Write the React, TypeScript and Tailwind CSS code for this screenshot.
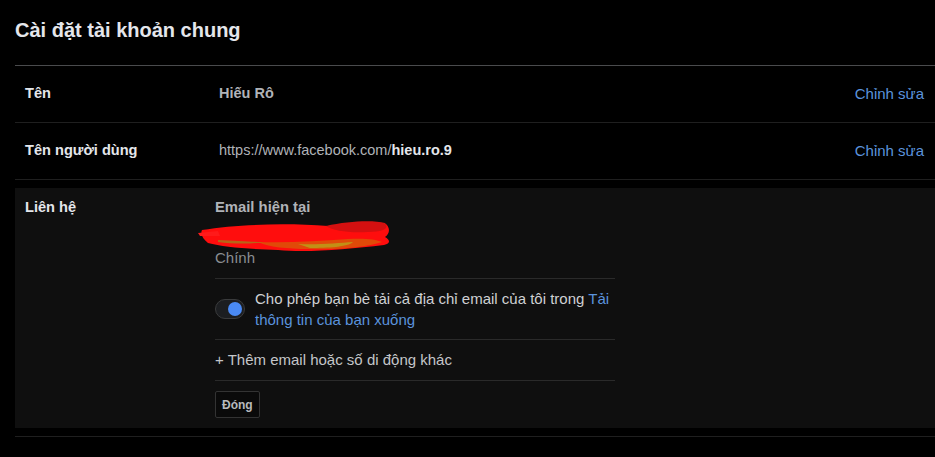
import React from "react";

const font = { fontFamily: '"Liberation Sans", Arial, sans-serif' };

function Scribble() {
  // vệt tô đỏ che email
  return (
    <svg width="196" height="32" viewBox="0 0 196 32" className="absolute left-[-17px] top-[5px]">
      <path d="M4 9 C40 3 90 2 130 5 C160 2 180 0 188 3 C193 8 191 13 187 16 C192 19 193 22 186 24 C150 28 110 32 80 29 C50 28 25 26 10 22 C5 18 2 13 4 9 Z" fill="#ff0d0d" />
      <path d="M0 12 L20 10 L22 15 L2 15 Z" fill="#ff1a1a" />
      <path d="M128 5 C150 0 175 -1 187 2 C191 7 187 11 170 11 C150 12 136 10 128 5 Z" fill="#d41010" />
      <path d="M60 21 C90 22 120 20 150 18 C165 17 178 18 184 21 C170 26 140 29 110 28 C90 28 70 26 60 21 Z" fill="#e04a08" />
      <path d="M100 23 C120 24 140 22 155 21 C150 26 130 27 112 27 Z" fill="#b9a11a" opacity="0.8" />
      <path d="M20 19 C40 20 55 21 66 21 C55 23 35 23 20 21 Z" fill="#9a8a1c" opacity="0.7" />
    </svg>
  );
}

function Row({ label, children }: { label: string; children: React.ReactNode }) {
  return (
    <div className="flex h-[57px] items-center border-b border-[#1f1f1f]">
      <div className="w-[204px] pl-[10px] text-[14.6px] font-bold text-[#e4e6eb]">{label}</div>
      <div className="flex-1 text-[14.5px] text-[#b0b3b8]">{children}</div>
      <a className="pr-[11px] text-[15px] text-[#5b93dd]">Chỉnh sửa</a>
    </div>
  );
}

export default function App() {
  return (
    <div className="min-h-[457px] w-full bg-black pl-[15px]" style={font}>
      <h1 className="pt-[18px] text-[20px] leading-[24px] font-bold text-[#e4e6eb]">
        Cài đặt tài khoản chung
      </h1>
      <div className="mt-[23px] border-t border-[#4a4b4d]">
        <Row label="Tên">
          <span className="font-bold">Hiếu Rô</span>
        </Row>
        <Row label="Tên người dùng">
          https://www.facebook.com/<span className="font-bold text-[#e4e6eb]">hieu.ro.9</span>
        </Row>

        <div className="border-b border-[#1f1f1f] py-2">
          <div className="flex bg-[#0f0f0f] pt-[10px] pb-[10px]">
            <div className="w-[200px] pl-[10px] text-[14.6px] leading-[18px] font-bold text-[#e4e6eb]">
              Liên hệ
            </div>
            <div className="w-[400px] text-[15px] leading-[18px]">
              <div className="text-[14.8px] font-bold text-[#b0b3b8]">Email hiện tại</div>
              <div className="relative h-[33px]">
                <Scribble />
              </div>
              <div className="mb-[11px] text-[#8a8d91]">Chính</div>

              <div className="flex items-center gap-[10px] border-t border-[#2a2a2a] py-[9px]">
                <div className="flex h-[20px] w-[30px] shrink-0 items-center justify-end rounded-full border border-[#3a3b3c] bg-[#1c1e21] pr-[2px]">
                  <div className="h-[14px] w-[14px] rounded-full bg-[#4a8af4]" />
                </div>
                <p className="leading-[21px] text-[#cfd1d4]">
                  Cho phép bạn bè tải cả địa chỉ email của tôi trong{" "}
                  <a className="text-[#5b93dd]">Tải thông tin của bạn xuống</a>
                </p>
              </div>

              <div className="border-t border-[#2a2a2a] py-[11px] text-[#c4c6c9]">
                + Thêm email hoặc số di động khác
              </div>

              <div className="border-t border-[#2a2a2a] pt-[10px]">
                <button className="h-[27px] rounded-[2px] border border-[#333] bg-[#0a0a0a] px-[6px] text-[12px] font-bold text-[#b8babd]">
                  Đóng
                </button>
              </div>
            </div>
          </div>
        </div>
      </div>
    </div>
  );
}
